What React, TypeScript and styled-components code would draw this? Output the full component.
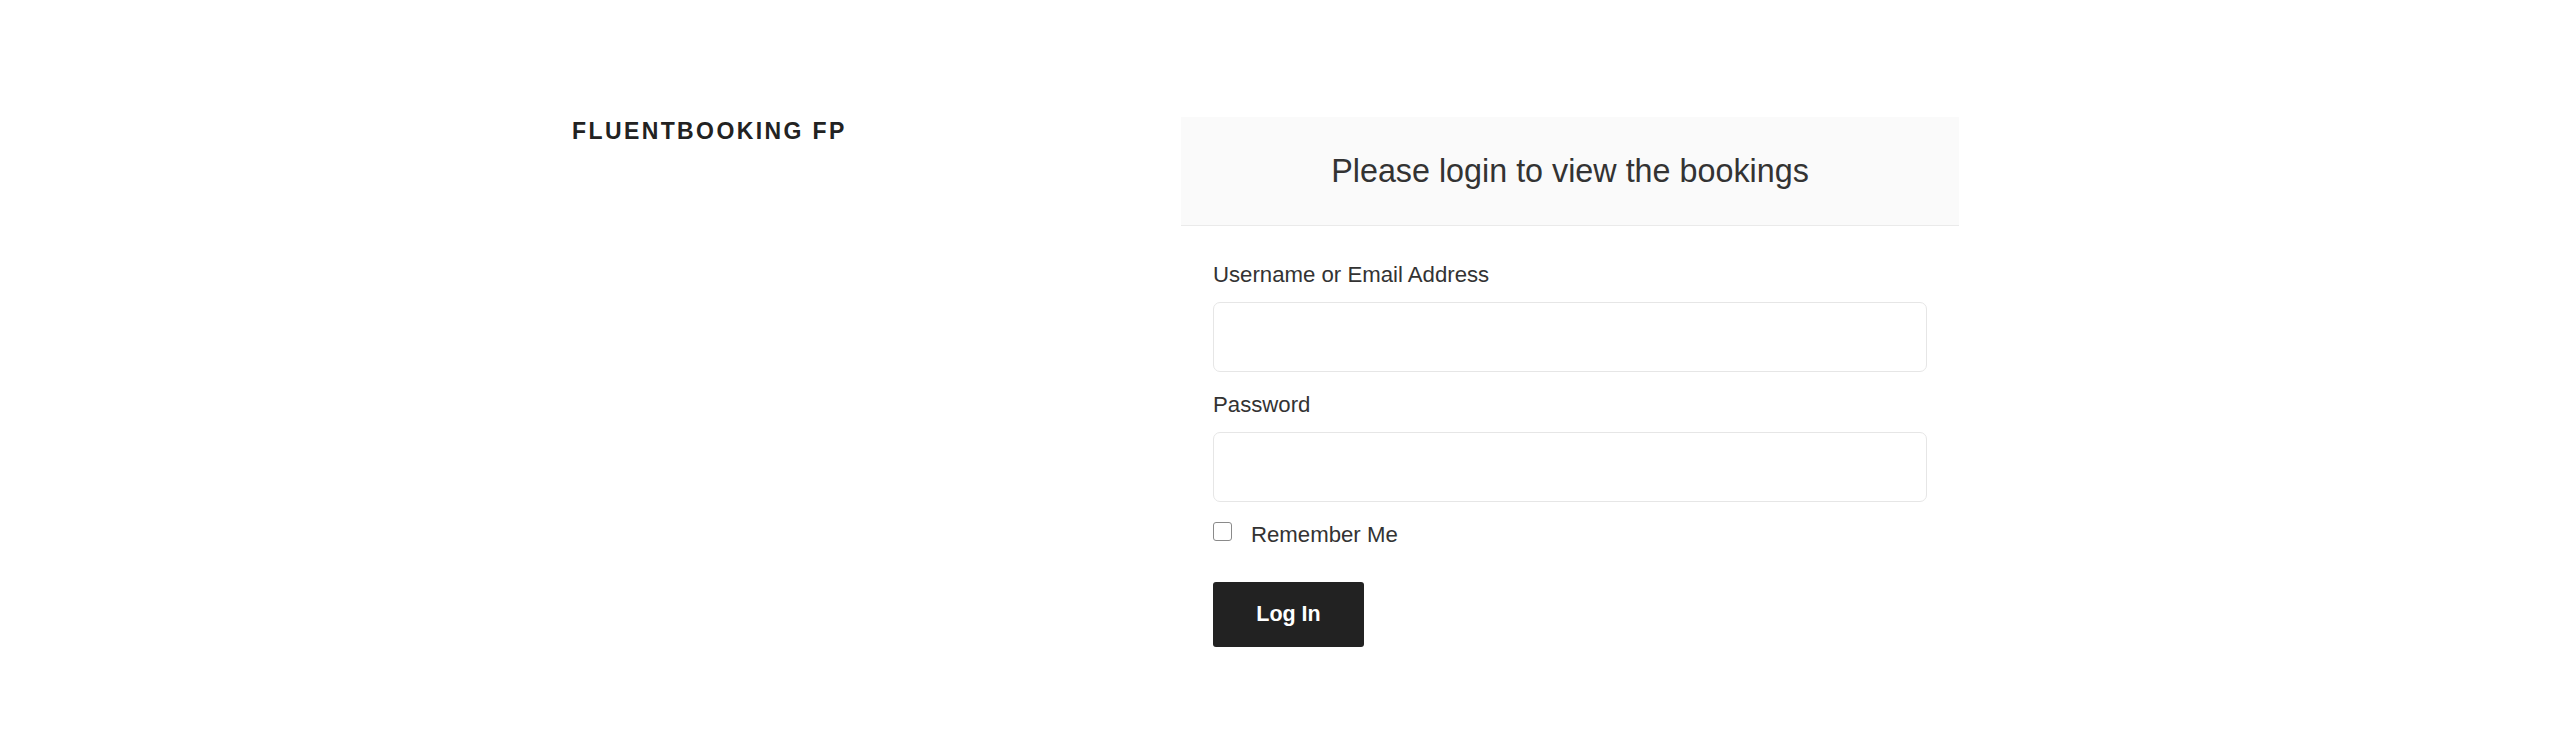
import { FunctionComponent } from 'react';
import styled, { createGlobalStyle } from 'styled-components';

const GlobalStyle = createGlobalStyle`
  * {
    box-sizing: border-box;
  }
  body {
    margin: 0;
    background: #ffffff;
    font-family: "Liberation Sans", Arial, sans-serif;
    color: #333333;
  }
`;

const App: FunctionComponent = () => {
  return (
    <>
      <GlobalStyle />
      <StyledPage>
        <StyledWrap>
          {/* Site branding */}
          <SiteTitle>Fluentbooking FP</SiteTitle>

          {/* Login box */}
          <LoginCard>
            <CardHeader>
              <CardTitle>Please login to view the bookings</CardTitle>
            </CardHeader>
            <LoginForm onSubmit={(e) => e.preventDefault()}>
              <Field>
                <Label htmlFor="user_login">Username or Email Address</Label>
                <TextInput id="user_login" type="text" />
              </Field>
              <Field>
                <Label htmlFor="user_pass">Password</Label>
                <TextInput id="user_pass" type="password" />
              </Field>
              <RememberRow>
                <Checkbox id="rememberme" type="checkbox" />
                <RememberLabel htmlFor="rememberme">Remember Me</RememberLabel>
              </RememberRow>
              <SubmitButton type="submit">Log In</SubmitButton>
            </LoginForm>
          </LoginCard>
        </StyledWrap>
      </StyledPage>
    </>
  );
};

const StyledPage = styled.div`
  min-height: 740px;
  padding-top: 117px;
`;

const StyledWrap = styled.div`
  display: grid;
  grid-template-columns: 609px 778px;
  width: 1416px;
  margin: 0 auto;
  align-items: start;
`;

const SiteTitle = styled.h1`
  margin: 0;
  font-size: 23px;
  line-height: 1.25;
  font-weight: 800;
  letter-spacing: 2.4px;
  text-transform: uppercase;
  color: #222222;
`;

const LoginCard = styled.div`
  display: flex;
  flex-direction: column;
`;

const CardHeader = styled.div`
  display: flex;
  align-items: center;
  justify-content: center;
  height: 109px;
  background: #fafafa;
  border-bottom: 1px solid #eaeaea;
`;

const CardTitle = styled.h2`
  margin: 0;
  font-size: 32.3px;
  font-weight: 400;
  line-height: 1.2;
  color: #333333;
`;

const LoginForm = styled.form`
  display: flex;
  flex-direction: column;
  align-items: flex-start;
  padding: 32px 32px 0;
`;

const Field = styled.div`
  display: flex;
  flex-direction: column;
  width: 100%;
  margin-bottom: 16px;
`;

const Label = styled.label`
  display: block;
  font-size: 22.2px;
  line-height: 33px;
  margin-bottom: 11px;
  color: #333333;
`;

const TextInput = styled.input`
  width: 100%;
  height: 70px;
  padding: 0 16px;
  border: 1px solid #e6e6e6;
  border-radius: 7px;
  background: #ffffff;
  font-family: inherit;
  font-size: 22px;
  color: #333333;
  outline: none;
`;

const RememberRow = styled.div`
  display: flex;
  align-items: center;
  height: 33px;
`;

const Checkbox = styled.input`
  appearance: none;
  width: 19px;
  height: 19px;
  margin: -6px 19px 0 0;
  border: 1.5px solid #8a8a8a;
  border-radius: 3px;
  background: #ffffff;
`;

const RememberLabel = styled.label`
  font-size: 22.2px;
  line-height: 33px;
  color: #333333;
`;

const SubmitButton = styled.button`
  margin-top: 31px;
  width: 151px;
  height: 65px;
  border: none;
  border-radius: 3px;
  background: #222222;
  color: #ffffff;
  font-family: inherit;
  font-size: 21.5px;
  font-weight: 800;
  cursor: pointer;
`;

export default App;
